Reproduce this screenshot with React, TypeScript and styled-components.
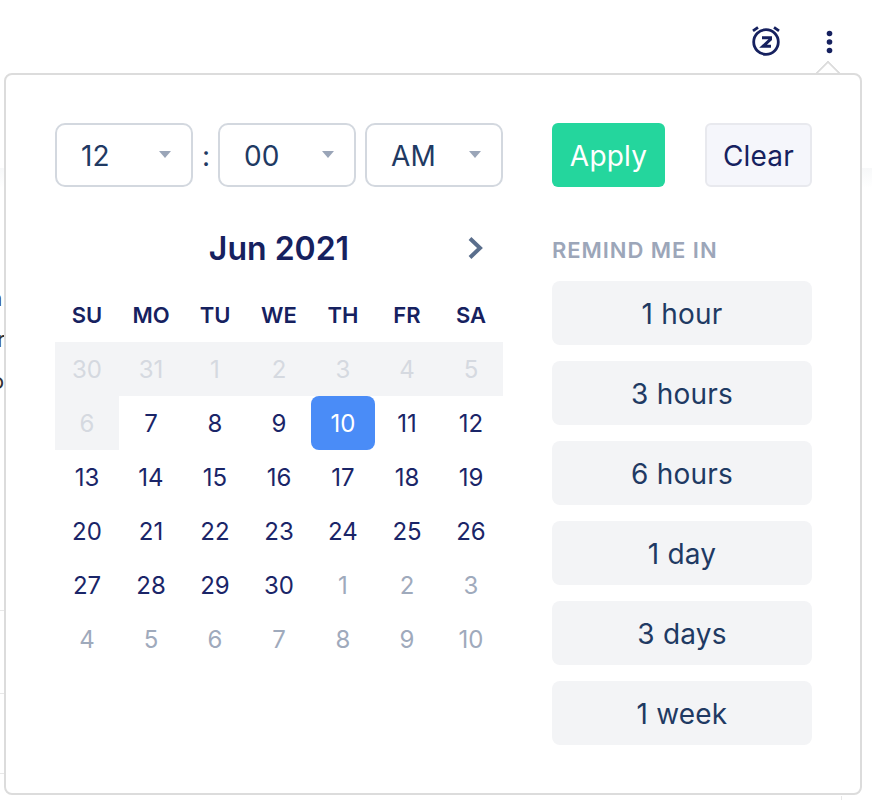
import React from "react";
import styled, { createGlobalStyle } from "styled-components";

const Global = createGlobalStyle`
  html, body { margin: 0; padding: 0; background: #fff; }
  body { font-family: Inter, "Noto Sans", sans-serif; overflow: hidden; }
`;

const Page = styled.div`
  position: relative;
  width: 872px;
  height: 800px;
  overflow: hidden;
  background: #fff;
`;

const BackdropStrip = styled.div`
  position: absolute;
  right: 0;
  top: 168px;
  width: 10px;
  height: 20px;
  background: linear-gradient(#f7f8f9, #fff);
`;

const LeftStrip = styled.div`
  position: absolute;
  left: 0;
  top: 168px;
  width: 5px;
  height: 20px;
  background: linear-gradient(#f7f8f9, #fff);
`;

const ClippedLetter = styled.span<{ $top: number; $left: number }>`
  position: absolute;
  left: ${(p) => p.$left}px;
  top: ${(p) => p.$top}px;
  font-size: 22px;
  line-height: 26px;
  color: #333;
`;

const Rule = styled.div<{ $top: number }>`
  position: absolute;
  left: 0;
  top: ${(p) => p.$top}px;
  width: 5px;
  height: 1px;
  background: #e8e8e8;
`;

const BelowTick = styled.div`
  position: absolute;
  left: 841px;
  top: 796px;
  width: 1px;
  height: 4px;
  background: #e8e8e8;
`;

const TopBar = styled.div`
  height: 73px;
  display: flex;
  align-items: flex-start;
  justify-content: flex-end;
  gap: 43px;
  padding: 25px 37px 0 0;
  box-sizing: border-box;
`;

const IconBox = styled.div<{ $offset: number }>`
  display: flex;
  margin-top: ${(p) => p.$offset}px;
`;

const Popover = styled.div`
  position: relative;
  margin-left: 4px;
  width: 858px;
  height: 722px;
  box-sizing: border-box;
  border: 2px solid #dcdcdc;
  border-radius: 8px;
  background: #fff;
  padding: 48px 48px 0 49px;
  display: grid;
  grid-template-columns: 448px 260px;
  column-gap: 49px;
  grid-template-rows: 64px auto;
  row-gap: 36px;
`;

const Caret = styled.div`
  position: absolute;
  top: -11px;
  right: 23px;
  width: 18px;
  height: 18px;
  transform: rotate(45deg);
  background: #fff;
  border-left: 2px solid #dcdcdc;
  border-top: 2px solid #dcdcdc;
  box-sizing: border-box;
  clip-path: polygon(0 0, 100% 0, 0 100%);
`;

const TimeRow = styled.div`
  display: flex;
  align-items: center;
`;

const Select = styled.div`
  width: 138px;
  height: 64px;
  box-sizing: border-box;
  border: 2px solid #d3d8df;
  border-radius: 10px;
  padding: 2px 20px 0 24px;
  display: flex;
  align-items: center;
  justify-content: space-between;
  font-size: 28px;
  letter-spacing: 0.2px;
  color: #1f3a63;
`;

const SelectArrow = styled.span`
  width: 0;
  height: 0;
  margin-top: -4px;
  border-left: 6.5px solid transparent;
  border-right: 6.5px solid transparent;
  border-top: 7.5px solid #9aa5b8;
`;

const Colon = styled.span`
  width: 24px;
  padding: 2px 0 0 1px;
  text-align: center;
  font-size: 28px;
  color: #1f3a63;
`;

const SelectGap = styled.span`
  width: 9px;
`;

const Actions = styled.div`
  display: flex;
  justify-content: space-between;
`;

const Apply = styled.button`
  width: 113px;
  height: 64px;
  border: 0;
  border-radius: 6px;
  background: #24d69d;
  color: #fff;
  font: 400 28px Inter, sans-serif;
  letter-spacing: 0.2px;
  padding: 2px 0 0;
`;

const Clear = styled.button`
  width: 107px;
  height: 64px;
  box-sizing: border-box;
  border: 2px solid #e8e9ee;
  border-radius: 6px;
  background: #f5f6fb;
  color: #16215f;
  font: 400 28px Inter, sans-serif;
  letter-spacing: 0.2px;
  padding: 2px 0 0;
`;

const CalendarColumn = styled.div`
  display: flex;
  flex-direction: column;
`;

const MonthBar = styled.div`
  position: relative;
  height: 50px;
  display: flex;
  align-items: center;
  justify-content: center;
  font-size: 32px;
  font-weight: 600;
  color: #16215f;
`;

const MonthNext = styled.span`
  position: absolute;
  right: 17px;
  top: 13px;
  display: flex;
`;

const Grid = styled.div`
  display: grid;
  grid-template-columns: repeat(7, 64px);
  grid-auto-rows: 54px;
`;

const Weekdays = styled.div`
  display: grid;
  grid-template-columns: repeat(7, 64px);
  height: 69px;
  padding-top: 16px;
  box-sizing: border-box;
`;

const Weekday = styled.div`
  height: 52px;
  display: flex;
  align-items: center;
  justify-content: center;
  font-size: 22px;
  font-weight: 600;
  color: #16215f;
`;

type Kind = "past" | "now" | "selected" | "next";

const Day = styled.div<{ $kind: Kind }>`
  display: flex;
  align-items: center;
  justify-content: center;
  font-size: 24px;
  color: ${(p) =>
    p.$kind === "past" ? "#d5d9e0" : p.$kind === "next" ? "#9faabc" : p.$kind === "selected" ? "#fff" : "#1a2568"};
  background: ${(p) => (p.$kind === "past" ? "#f3f4f6" : p.$kind === "selected" ? "#4a8cf7" : "transparent")};
  border-radius: ${(p) => (p.$kind === "selected" ? "8px" : "0")};
`;

const RemindColumn = styled.div`
  display: flex;
  flex-direction: column;
`;

const RemindLabel = styled.div`
  height: 58px;
  box-sizing: border-box;
  padding-bottom: 4px;
  display: flex;
  align-items: center;
  font-size: 22px;
  font-weight: 600;
  letter-spacing: 0.95px;
  color: #9ca6b9;
`;

const RemindList = styled.div`
  display: flex;
  flex-direction: column;
  gap: 16px;
`;

const RemindButton = styled.button`
  height: 64px;
  border: 0;
  border-radius: 8px;
  background: #f3f4f6;
  color: #1f3a63;
  font: 400 28px Inter, sans-serif;
  letter-spacing: 0.2px;
  padding: 2px 0 0;
`;

const weekdays = ["SU", "MO", "TU", "WE", "TH", "FR", "SA"];
const past = [30, 31, 1, 2, 3, 4, 5, 6];
const now = Array.from({ length: 24 }, (_, i) => i + 7);
const next = [1, 2, 3, 4, 5, 6, 7, 8, 9, 10];
const days: { n: number; k: Kind }[] = [
  ...past.map((n) => ({ n, k: "past" as Kind })),
  ...now.map((n) => ({ n, k: (n === 10 ? "selected" : "now") as Kind })),
  ...next.map((n) => ({ n, k: "next" as Kind })),
];
const reminders = ["1 hour", "3 hours", "6 hours", "1 day", "3 days", "1 week"];

const SnoozeIcon = () => (
  <svg width="32" height="32" viewBox="0 0 32 32" fill="none" stroke="#16215f">
    <circle cx="16" cy="17" r="12.3" strokeWidth="2.8" />
    <path d="M3 5.800 8 2.300M29 5.800 24 2.300" strokeWidth="2.800" />
    <path d="M12 12.800h8.500v1.500l-7.500 7h8" strokeWidth="3" />
  </svg>
);

const DotsIcon = () => (
  <svg width="10" height="26" viewBox="0 0 10 26" fill="#16215f">
    <circle cx="4.500" cy="4.500" r="2.800" />
    <circle cx="4.500" cy="13" r="2.800" />
    <circle cx="4.500" cy="21.500" r="2.800" />
  </svg>
);

const ChevronIcon = () => (
  <svg width="20" height="24" viewBox="0 0 20 24" fill="none" stroke="#5a6e8c" strokeWidth="4">
    <path d="M4 2.500 14 12 4 21.500" />
  </svg>
);

const TimeSelect = ({ value }: { value: string }) => (
  <Select>
    {value}
    <SelectArrow />
  </Select>
);

export default function App() {
  return (
    <Page>
      <Global />
      <BackdropStrip />
      <LeftStrip />
      <ClippedLetter $top={285} $left={-10}>a</ClippedLetter>
      <ClippedLetter $top={326} $left={-3}>r</ClippedLetter>
      <ClippedLetter $top={368} $left={-9}>o</ClippedLetter>
      <Rule $top={610} />
      <Rule $top={693} />
      <Rule $top={773} />
      <BelowTick />
      <TopBar>
        <IconBox $offset={0}>
          <SnoozeIcon />
        </IconBox>
        <IconBox $offset={4}>
          <DotsIcon />
        </IconBox>
      </TopBar>
      <Popover>
        <Caret />
        <TimeRow>
          <TimeSelect value="12" />
          <Colon>:</Colon>
          <TimeSelect value="00" />
          <SelectGap />
          <TimeSelect value="AM" />
        </TimeRow>
        <Actions>
          <Apply>Apply</Apply>
          <Clear>Clear</Clear>
        </Actions>
        <CalendarColumn>
          <MonthBar>
            Jun 2021
            <MonthNext>
              <ChevronIcon />
            </MonthNext>
          </MonthBar>
          <Weekdays>
            {weekdays.map((d) => (
              <Weekday key={d}>{d}</Weekday>
            ))}
          </Weekdays>
          <Grid>
            {days.map((d, i) => (
              <Day key={i} $kind={d.k}>
                {d.n}
              </Day>
            ))}
          </Grid>
        </CalendarColumn>
        <RemindColumn>
          <RemindLabel>REMIND ME IN</RemindLabel>
          <RemindList>
            {reminders.map((r) => (
              <RemindButton key={r}>{r}</RemindButton>
            ))}
          </RemindList>
        </RemindColumn>
      </Popover>
    </Page>
  );
}
